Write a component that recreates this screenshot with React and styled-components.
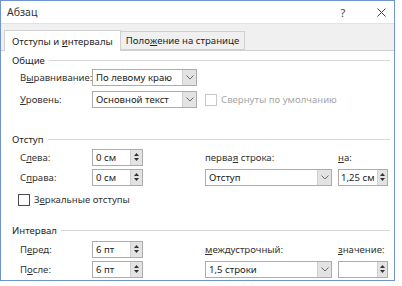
import React from "react";
import styled, { createGlobalStyle } from "styled-components";

const Global = createGlobalStyle`
  html, body { margin: 0; padding: 0; background: #ffffff; }
  body { font-family: "Noto Sans", "Open Sans", sans-serif; font-size: 9.6px; color: #2b2b2b; }
  * { box-sizing: border-box; }
`;

const Dialog = styled.div`
  width: 395px;
  height: 281px;
  border: 1px solid #6f93cc;
  background: #ffffff;
  display: flex;
  flex-direction: column;
  overflow: hidden;
`;

const TitleBar = styled.div`
  height: 22px;
  display: flex;
  align-items: center;
  padding-left: 6px;
  padding-right: 4px;
  flex-shrink: 0;
`;

const Title = styled.div`
  flex: 1;
  font-size: 10.5px;
  color: #333;
`;

const TitleBtn = styled.div`
  width: ${(p) => p.$w}px;
  margin-left: ${(p) => p.$ml || 0}px;
  display: flex;
  justify-content: center;
  align-items: center;
  font-size: 11px;
  color: #444;
`;

const TabStrip = styled.div`
  height: 27px;
  background: #f0f0f0;
  border-top: 1px solid #e2e2e2;
  display: flex;
  align-items: flex-end;
  padding-left: 3px;
  flex-shrink: 0;
`;

const Tab = styled.div`
  height: ${(p) => (p.$active ? 21 : 19)}px;
  padding: 0 ${(p) => (p.$active ? 7 : 5)}px;
  display: flex;
  align-items: center;
  background: ${(p) => (p.$active ? "#ffffff" : "#f0f0f0")};
  border: 1px solid #d0d0d0;
  border-bottom: ${(p) => (p.$active ? "none" : "1px solid #d0d0d0")};
  border-left: ${(p) => (p.$active ? "1px solid #d0d0d0" : "none")};
  margin-bottom: ${(p) => (p.$active ? -1 : 0)}px;
  position: relative;
  color: #262626;
  white-space: pre;
`;

const Panel = styled.div`
  flex: 1;
  border-top: 1px solid #d0d0d0;
  padding: 2px 4px 0 11px;
  display: flex;
  flex-direction: column;
`;

const GroupHeader = styled.div`
  height: 15px;
  display: flex;
  align-items: center;
  gap: 4px;
  margin-top: ${(p) => p.$mt || 0}px;
  color: #262626;
`;

const Rule = styled.div`
  flex: 1;
  height: 1px;
  background: #d6d6d6;
`;

const Grid = styled.div`
  display: grid;
  grid-template-columns: 72px 113px 133px 50px;
  grid-auto-rows: ${(p) => p.$rh}px;
  row-gap: ${(p) => p.$gap}px;
  padding-left: 8px;
  margin-top: ${(p) => p.$mt || 0}px;
  align-items: center;
`;

const Label = styled.div`
  color: ${(p) => (p.$disabled ? "#a6a6a6" : "#333")};
  white-space: nowrap;
  grid-column: ${(p) => p.$col || "auto"};
`;

const U = styled.span`
  text-decoration: underline;
  text-underline-offset: 1px;
`;

const Select = styled.div`
  width: ${(p) => p.$w}px;
  height: ${(p) => p.$h || 17}px;
  border: 1px solid #acacac;
  background: #fff;
  display: flex;
  align-items: stretch;
  grid-column: ${(p) => p.$col || "auto"};
`;

const SelectText = styled.div`
  flex: 1;
  padding-left: ${(p) => p.$pl ?? 3}px;
  display: flex;
  align-items: center;
  color: #222;
  white-space: nowrap;
  overflow: hidden;
`;

const DropBtn = styled.div`
  width: 14px;
  background: #e3e3e3;
  border-left: 1px solid #cfcfcf;
  display: flex;
  align-items: center;
  justify-content: center;
`;

const SpinBtn = styled.div`
  width: ${(p) => p.$w || 12}px;
  background: #e3e3e3;
  border-left: 1px solid #d0d0d0;
  display: flex;
  flex-direction: column;
  align-items: center;
  justify-content: center;
  gap: 2px;
`;

const CheckRow = styled.div`
  display: flex;
  align-items: center;
  gap: 4px;
  grid-column: ${(p) => p.$col || "auto"};
  white-space: nowrap;
  margin-left: ${(p) => p.$ml || 0}px;
`;

const Box = styled.div`
  width: 12px;
  height: 12px;
  border: 1px solid ${(p) => (p.$disabled ? "#c8c8c8" : "#4a4a4a")};
  background: #fff;
`;

const Chevron = () => (
  <svg width="8" height="5" viewBox="0 0 8 5">
    <polyline points="0.5,0.5 4,4 7.5,0.5" fill="none" stroke="#6a6a6a" strokeWidth="1" />
  </svg>
);

const Arrows = () => (
  <>
    <svg width="5" height="3" viewBox="0 0 5 3"><polygon points="0,3 2.5,0 5,3" fill="#333" /></svg>
    <svg width="5" height="3" viewBox="0 0 5 3"><polygon points="0,0 2.5,3 5,0" fill="#333" /></svg>
  </>
);

const Drop = ({ w, col, h, children }) => (
  <Select $w={w} $col={col} $h={h}>
    <SelectText>{children}</SelectText>
    <DropBtn><Chevron /></DropBtn>
  </Select>
);

const Spin = ({ w, col, h, narrow, children }) => (
  <Select $w={w} $col={col} $h={h}>
    <SelectText $pl={narrow ? 2 : 3}>{children}</SelectText>
    <SpinBtn $w={narrow ? 10 : 12}><Arrows /></SpinBtn>
  </Select>
);

export default function App() {
  return (
    <>
      <Global />
      <Dialog>
        <TitleBar>
          <Title>Абзац</Title>
          <TitleBtn $w={20}>?</TitleBtn>
          <TitleBtn $w={18} $ml={19}>
            <svg width="9" height="9" viewBox="0 0 9 9">
              <path d="M0.5 0.5 L8.5 8.5 M8.5 0.5 L0.5 8.5" stroke="#444" strokeWidth="1" />
            </svg>
          </TitleBtn>
        </TitleBar>
        <TabStrip>
          <Tab $active>
            <span>Отступы и </span>
            <U>и</U>
            <span>нтервалы</span>
          </Tab>
          <Tab>Поло<U>ж</U>ение на странице</Tab>
        </TabStrip>
        <Panel>
          <GroupHeader>
            <span>Общие</span>
            <Rule />
          </GroupHeader>
          <Grid $rh={17} $gap={5} $mt={1}>
            <Label>В<U>ы</U>равнивание:</Label>
            <Drop w={105}>По левому краю</Drop>
            <div />
            <div />
            <Label><U>У</U>ровень:</Label>
            <Drop w={105}>Основной текст</Drop>
            <CheckRow>
              <Box $disabled />
              <Label $disabled>Свернуты по умолчанию</Label>
            </CheckRow>
          </Grid>

          <GroupHeader $mt={24}>
            <span>Отступ</span>
            <Rule />
          </GroupHeader>
          <Grid $rh={16} $gap={4} $mt={2}>
            <Label>С<U>л</U>ева:</Label>
            <Spin w={51}>0 см</Spin>
            <Label>перва<U>я</U> строка:</Label>
            <Label><U>н</U>а:</Label>
            <Label>С<U>п</U>рава:</Label>
            <Spin w={51}>0 см</Spin>
            <Drop w={127}>Отступ</Drop>
            <Spin w={50} narrow>1,25 см</Spin>
          </Grid>
          <Grid $rh={13} $gap={0} $mt={8}>
            <CheckRow $col="1 / 3" $ml={-2}>
              <Box />
              <Label>З<U>е</U>ркальные отступы</Label>
            </CheckRow>
          </Grid>

          <GroupHeader $mt={17}>
            <span>Интервал</span>
            <Rule />
          </GroupHeader>
          <Grid $rh={16} $gap={4} $mt={3}>
            <Label>П<U>е</U>ред:</Label>
            <Spin w={51}>6 пт</Spin>
            <Label><U>м</U>еждустрочный:</Label>
            <Label><U>з</U>начение:</Label>
            <Label>П<U>о</U>сле:</Label>
            <Spin w={51}>6 пт</Spin>
            <Drop w={127} h={17}>1,5 строки</Drop>
            <Spin w={50} h={17} narrow></Spin>
          </Grid>
        </Panel>
      </Dialog>
    </>
  );
}
